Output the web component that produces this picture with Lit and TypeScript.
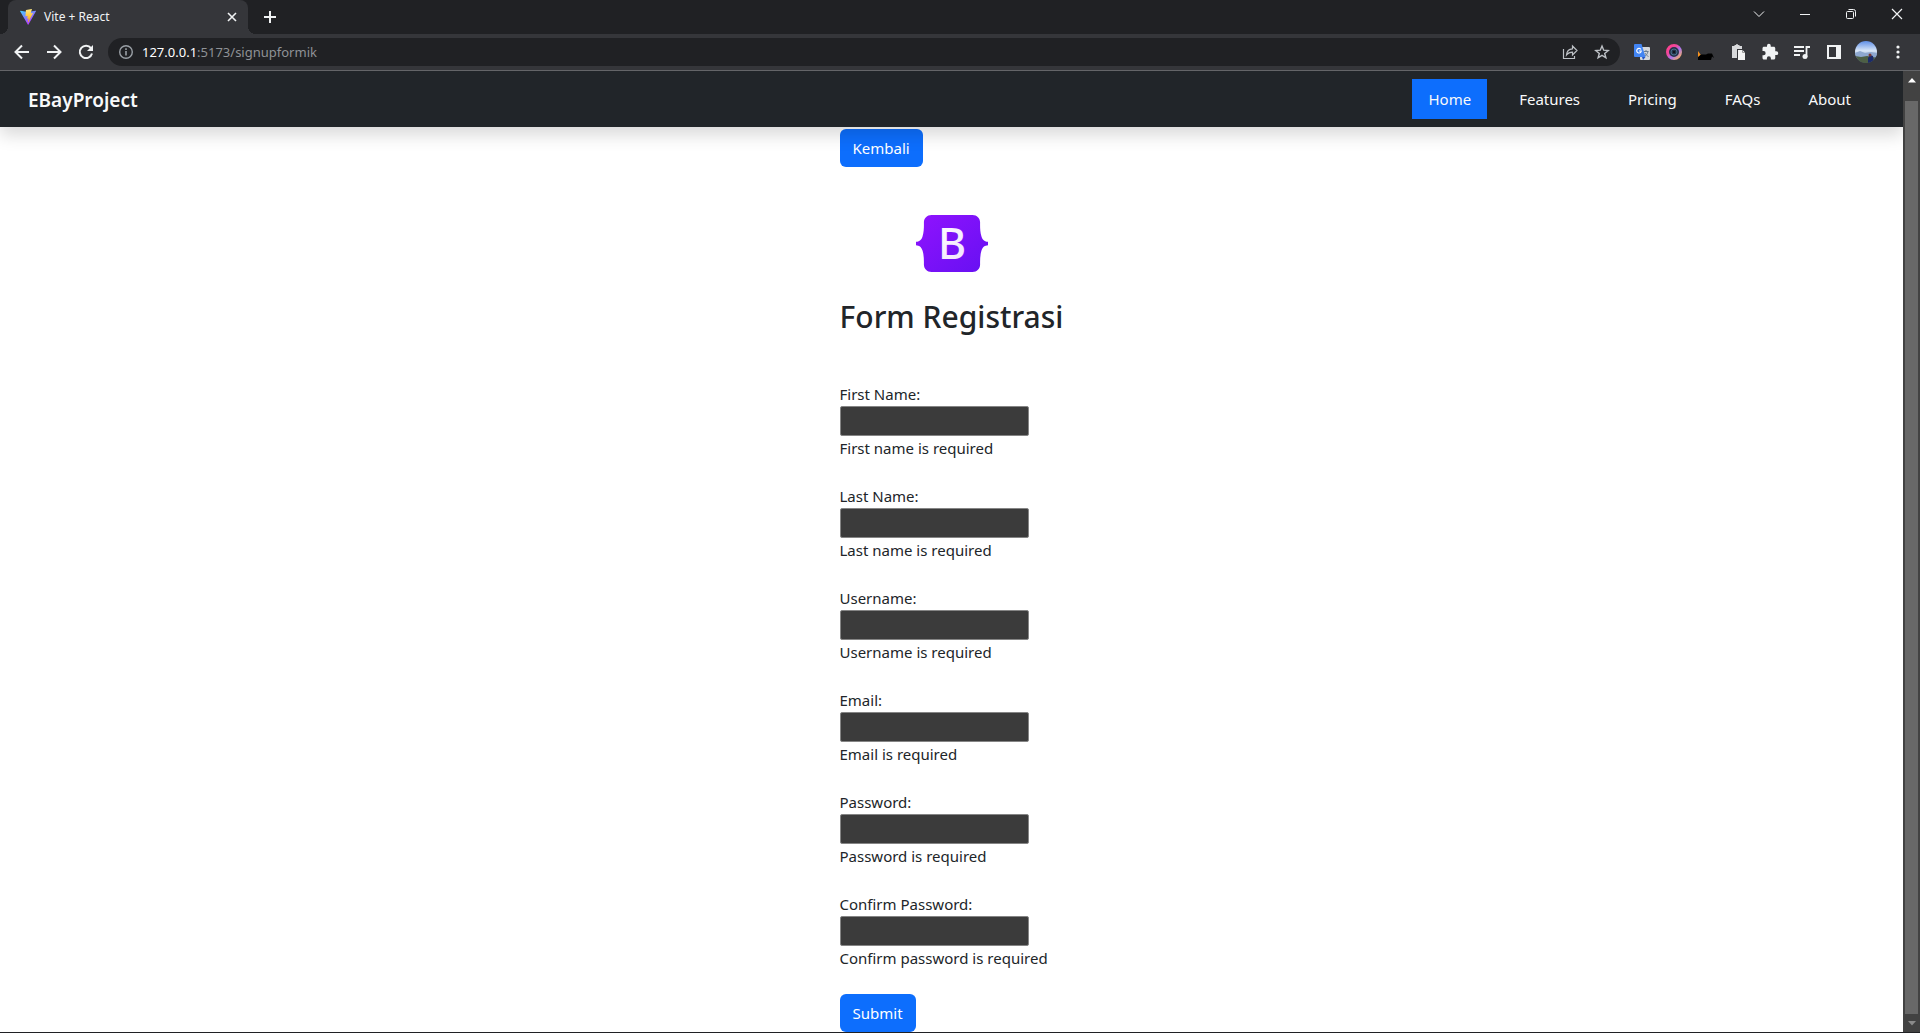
import { LitElement, html, css, svg } from "lit";
import { customElement, property } from "lit/decorators.js";
import { classMap } from "lit/directives/class-map.js";

const base = css`
  *, *::before, *::after { box-sizing: border-box; }
  button { font: inherit; margin: 0; padding: 0; border: 0; background: none; color: inherit; cursor: pointer; }
  svg { display: block; }
`;

const line = (d: string, width = 2) =>
  svg`<path d=${d} fill="none" stroke="currentColor" stroke-width=${width} />`;

@customElement("browser-bar")
class BrowserBar extends LitElement {
  static styles = [base, css`
    :host { display: block; color: #f1f3f4; font-family: "Noto Sans", "Open Sans", sans-serif; }
    .strip { display: flex; align-items: stretch; height: 34px; padding-left: 8px; background: #202124; }
    .tab {
      position: relative; display: flex; align-items: center; width: 240px; padding: 0 8px 0 12px;
      background: #35363a; border-radius: 8px 8px 0 0; font-size: 12px;
    }
    .tab::before, .tab::after { content: ""; position: absolute; bottom: 0; width: 8px; height: 8px; }
    .tab::before { right: 100%; background: radial-gradient(circle at 0 0, transparent 8px, #35363a 8px); }
    .tab::after { left: 100%; background: radial-gradient(circle at 100% 0, transparent 8px, #35363a 8px); }
    .title { flex: 1; padding-left: 8px; text-align: left; line-height: 16px; }
    .plus { width: 44px; padding: 0 14px; }
    .windows { display: flex; margin-left: auto; }
    .windows button { display: grid; place-items: center; width: 46px; padding-bottom: 6px; }
    .tools { display: flex; align-items: center; height: 36px; padding: 0 6px; background: #35363a; }
    .tools > button { display: grid; place-items: center; width: 32px; height: 32px; }
    .omni {
      display: flex; align-items: center; flex: 1; height: 28px; margin: 0 6px; padding: 0 10px;
      border-radius: 14px; background: #202124; font-size: 13px; line-height: 20px;
    }
    .host { padding-left: 8px; color: #fff; }
    .path { flex: 1; min-width: 0; padding: 0; border: 0; outline: 0; background: none; color: #8f9296; font: inherit; }
    .info { color: #9aa0a6; }
    .omni .end { display: grid; place-items: center; width: 32px; color: #bdc1c6; }
    .omni .last { width: 16px; margin-left: 8px; }
    .edge { height: 1px; background: #646568; }
  `];

  render() {
    return html`
      <div class="strip">
        <div class="tab">
          <svg width="16" height="16" viewBox="0 0 32 32" aria-hidden="true">
            <defs>
              <linearGradient id="v" x1="0" y1="0" x2="0.6" y2="1"><stop offset="0" stop-color="#41d1ff" /><stop offset="1" stop-color="#bd34fe" /></linearGradient>
              <linearGradient id="y" x1="0" y1="0" x2="0" y2="1"><stop offset="0" stop-color="#ffea83" /><stop offset="1" stop-color="#ffa800" /></linearGradient>
            </defs>
            <path fill="url(#v)" d="M31.9 4.6 17 31.2c-.3.6-1.1.6-1.4 0L.2 4.6C-.2 4 .4 3.2 1 3.3L16 6l15-2.700c.8-.1 1.300.6.9 1.300z" />
            <path fill="url(#y)" d="M23.300 0 12.200 2.200c-.2 0-.4.2-.4.4L11 14.200c0 .3.200.500.500.400l3.200-.700c.3-.1.600.2.500.500l-.900 4.400c-.1.3.2.600.500.500l1.900-.600c.3-.1.600.2.500.500l-1.500 7c-.1.5.500.700.700.300L25.900 8.700c.2-.3-.1-.7-.5-.6l-3.300.6c-.3.1-.6-.2-.5-.5L23.800.6c.1-.4-.1-.7-.5-.6z" />
          </svg>
          <span class="title">Vite + React</span>
          <button aria-label="Close tab">
            <svg width="16" height="16" viewBox="0 0 16 16">${line("M4 4l8 8M12 4l-8 8", 1.6)}</svg>
          </button>
        </div>
        <button class="plus" aria-label="New tab">
          <svg width="16" height="16" viewBox="0 0 16 16">${line("M8 2v12M2 8h12", 2)}</svg>
        </button>
        <div class="windows">
          <button aria-label="Search tabs"><svg width="12" height="12" viewBox="0 0 12 12">${line("M1 3.500l5 5 5-5", 1)}</svg></button>
          <button aria-label="Minimize"><svg width="12" height="12" viewBox="0 0 12 12">${line("M1 6.500h10", 1)}</svg></button>
          <button aria-label="Restore">
            <svg width="12" height="12" viewBox="0 0 12 12">
              <rect x="1.500" y="3.500" width="7" height="7" rx="1" fill="none" stroke="currentColor" />
              ${line("M3.500 1.500h5a2 2 0 0 1 2 2v5", 1)}
            </svg>
          </button>
          <button aria-label="Close"><svg width="12" height="12" viewBox="0 0 12 12">${line("M1 1l10 10M11 1l-10 10", 1.2)}</svg></button>
        </div>
      </div>
      <div class="tools">
        <button aria-label="Back"><svg width="16" height="16" viewBox="0 0 16 16">${line("M15 8H2M8 1.500L1.500 8 8 14.500")}</svg></button>
        <button aria-label="Forward"><svg width="16" height="16" viewBox="0 0 16 16">${line("M1 8h13M8 1.500L14.500 8 8 14.500")}</svg></button>
        <button aria-label="Reload">
          <svg width="16" height="16" viewBox="0 0 16 16">
            ${line("M13 4.200A6.200 6.200 0 1 0 14 9.500")}
            <path fill="currentColor" d="M15 1v6H9z" />
          </svg>
        </button>
        <div class="omni">
          <svg class="info" width="16" height="16" viewBox="0 0 16 16" aria-hidden="true">
            <circle cx="8" cy="8" r="6.300" fill="none" stroke="currentColor" stroke-width="1.400" />
            ${line("M8 7v4.500M8 4.300v1.600", 1.6)}
          </svg>
          <label class="host" for="url">127.0.0.1</label>
          <input class="path" id="url" type="text" value=":5173/signupformik" />
          <button class="end" aria-label="Share">
            <svg width="16" height="16" viewBox="0 0 16 16">
              ${line("M1.500 5v9.500h11V12", 1.2)}
              ${line("M4.500 11c.3-4 2.500-6 6-6.200V2L15 6.500 10.500 11V8.200C8 8.200 6 9 4.500 11z", 1.2)}
            </svg>
          </button>
          <button class="end last" aria-label="Bookmark this tab">
            <svg width="16" height="16" viewBox="0 0 16 16">${line("M8 2l1.700 4.200 4.500.3-3.500 2.900 1.200 4.400L8 11.400l-3.900 2.400 1.200-4.400L1.800 6.500l4.500-.3z", 1.4)}</svg>
          </button>
        </div>
        <button aria-label="Translate">
          <svg width="16" height="16" viewBox="0 0 16 16">
            <rect x="6" y="3" width="10" height="13" rx="1" fill="#d5d8dc" />
            ${svg`<path d="M9.500 7.500h5M12 6v1.500M14 7.500c-.5 2.500-2 4-3.500 5M11 9c.7 1.500 1.700 2.500 3.500 3.500" stroke="#6b7f93" fill="none" />`}
            <path d="M1 0h6.500L11.500 13H1a1 1 0 0 1-1-1V1a1 1 0 0 1 1-1z" fill="#4285f4" />
            <path d="M8 13h3.500L9 16z" fill="#2456c4" />
            <path d="M7 5.500A2.300 2.300 0 1 0 7.300 7H5" stroke="#fff" stroke-width="1.200" fill="none" />
          </svg>
        </button>
        <button aria-label="Camera extension">
          <svg width="16" height="16" viewBox="0 0 16 16">
            <defs><linearGradient id="ring" x1="0" y1="0" x2="1" y2="1"><stop offset="0" stop-color="#ff3d8b" /><stop offset="0.350" stop-color="#f0489c" /><stop offset="0.600" stop-color="#a875f0" /><stop offset="1" stop-color="#ffb35a" /></linearGradient></defs>
            <circle cx="8" cy="8" r="6.500" fill="#26324a" stroke="url(#ring)" stroke-width="3" />
            <circle cx="8" cy="8" r="3" fill="none" stroke="#46708c" />
            <circle cx="8" cy="8" r="1.200" fill="#10151d" />
          </svg>
        </button>
        <button aria-label="Cat extension">
          <svg width="16" height="16" viewBox="0 0 16 16">
            <path d="M0 7l2.500 3.500V13H0z" fill="#f6921e" />
            <path d="M0 13l3-2.500h5L10 9.500h4L16 14l-2-1.500-1 3.500H0z" fill="#000" />
          </svg>
        </button>
        <button aria-label="Clipboard extension">
          <svg width="16" height="16" viewBox="0 0 16 16">
            <path d="M2 2h2.500V1H6a1 1 0 0 1 2 0h1.500v1H12v3H7v9H2z" fill="#d8d9db" />
            <path d="M8 6h4.500L15 8.500V16H8z" fill="#f3f3f3" />
            <path d="M12.500 6v2.500H15" fill="none" stroke="#999" />
          </svg>
        </button>
        <button aria-label="Extensions">
          <svg width="18" height="18" viewBox="0 0 24 24"><path fill="currentColor" d="M20.500 11H19V7c0-1.100-.9-2-2-2h-4V3.500a2.500 2.500 0 0 0-5 0V5H4c-1.100 0-2 .9-2 2v3.800h1.500a2.700 2.700 0 0 1 0 5.400H2V20c0 1.100.9 2 2 2h3.800v-1.500a2.700 2.700 0 0 1 5.400 0V22H17c1.100 0 2-.9 2-2v-4h1.500a2.500 2.500 0 0 0 0-5z" /></svg>
        </button>
        <button aria-label="Media controls">
          <svg width="18" height="16" viewBox="0 0 18 16">
            ${line("M1 3h10M1 7h10M1 11h6M13.500 13V3H17", 1.8)}
            <circle cx="12" cy="12.500" r="2.500" fill="currentColor" />
          </svg>
        </button>
        <button aria-label="Side panel">
          <svg width="14" height="14" viewBox="0 0 14 14"><path fill="currentColor" fill-rule="evenodd" d="M0 0h14v14H0zM2 2v10h7V2z" /></svg>
        </button>
        <button aria-label="Profile">
          <svg width="22" height="22" viewBox="0 0 22 22">
            <defs>
              <linearGradient id="sky" x1="0" y1="0" x2="0" y2="1"><stop offset="0" stop-color="#5f8fe8" /><stop offset="0.450" stop-color="#dbe8f8" /><stop offset="0.650" stop-color="#8fa9cc" /><stop offset="1" stop-color="#3c5066" /></linearGradient>
              <clipPath id="round"><circle cx="11" cy="11" r="11" /></clipPath>
            </defs>
            <g clip-path="url(#round)">
              <rect width="22" height="22" fill="url(#sky)" />
              <path d="M0 12l5-2 5 2 6-1 6 1v4H0z" fill="#8ea8cf" />
              <path d="M0 15l6 1 6-1 10 2v5H0z" fill="#4d5f45" />
              <path d="M13 22v-5l2-3 3 1 1 7z" fill="#1b2a6b" />
              <circle cx="15" cy="14" r="1.500" fill="#7b3a34" />
            </g>
          </svg>
        </button>
        <button aria-label="Menu">
          <svg width="4" height="16" viewBox="0 0 4 16"><g fill="currentColor"><circle cx="2" cy="3" r="1.600" /><circle cx="2" cy="8" r="1.600" /><circle cx="2" cy="13" r="1.600" /></g></svg>
        </button>
      </div>
      <div class="edge"></div>
    `;
  }
}

@customElement("site-header")
class SiteHeader extends LitElement {
  @property() active = "Home";

  static styles = [base, css`
    :host { display: block; position: relative; z-index: 1; box-shadow: 0 8px 16px rgba(0, 0, 0, 0.15); }
    .bar { display: flex; align-items: center; height: 56px; padding: 0 36px 0 28px; background: #212529; }
    .brand { padding-top: 2px; color: #f8f9fa; font-size: 19px; font-weight: 600; text-decoration: none; }
    .links { display: flex; gap: 16px; margin-left: auto; }
    .link { padding: 8px 16px; color: #f8f9fa; line-height: 24px; text-decoration: none; }
    .on { background: #0d6efd; }
  `];

  render() {
    return html`
      <header class="bar">
        <a class="brand" href="#">EBayProject</a>
        <nav class="links">
          ${["Home", "Features", "Pricing", "FAQs", "About"].map(
            (name) => html`<a class=${classMap({ link: true, on: name === this.active })} href="#">${name}</a>`
          )}
        </nav>
      </header>
    `;
  }
}

const fields = [
  { id: "firstName", label: "First Name:", error: "First name is required", type: "text" },
  { id: "lastName", label: "Last Name:", error: "Last name is required", type: "text" },
  { id: "username", label: "Username:", error: "Username is required", type: "text" },
  { id: "email", label: "Email:", error: "Email is required", type: "email" },
  { id: "password", label: "Password:", error: "Password is required", type: "password" },
  { id: "confirm", label: "Confirm Password:", error: "Confirm password is required", type: "password" },
];

@customElement("signup-form")
class SignupForm extends LitElement {
  static styles = [base, css`
    :host { display: flex; justify-content: center; padding-top: 2px; color: #212529; }
    .column { width: 224px; white-space: nowrap; }
    .btn { height: 38px; padding: 0 13px; border-radius: 6px; background: #0d6efd; color: #fff; line-height: 24px; }
    .logo { margin: 48px 0 24px 76px; overflow: visible; }
    .title { margin: 0 0 46px; padding-top: 2px; font-size: 30px; font-weight: 500; line-height: 38px; }
    .field { display: flex; flex-direction: column; align-items: flex-start; margin-bottom: 24px; line-height: 24px; }
    .box { width: 189px; height: 30px; padding: 1px 4px; border: 1px solid #858585; border-radius: 2px; background: #3b3b3b; color: #fff; font: inherit; }
    .mark { font-family: "Noto Sans", "Open Sans", sans-serif; font-size: 43px; font-weight: 500; }
  `];

  render() {
    return html`
      <main class="column">
        <button class="btn" type="button">Kembali</button>
        <svg class="logo" width="72" height="57" viewBox="0 0 72 57" aria-hidden="true">
          <defs>
            <linearGradient id="bg" x1="0" y1="0" x2="1" y2="1"><stop offset="0" stop-color="#9013fe" /><stop offset="1" stop-color="#6610f2" /></linearGradient>
            <linearGradient id="fg" x1="0" y1="0" x2="0.500" y2="1"><stop offset="0" stop-color="#fff" /><stop offset="1" stop-color="#f1e5fc" /></linearGradient>
          </defs>
          <path fill="url(#bg)" d="M15.500 0C11 0 7.800 3.500 7.900 7.700c.1 4 0 9.200-1.300 13.500C5.300 25.500 3.100 26.500 0 26.800v3.400c3.100.3 5.300 1.300 6.600 5.600 1.300 4.300 1.400 9.500 1.300 13.500C7.800 53.500 11 57 15.500 57h41c4.500 0 7.700-3.500 7.600-7.700-.1-4 0-9.200 1.300-13.500 1.300-4.300 3.500-5.300 6.600-5.600v-3.400c-3.100-.3-5.300-1.300-6.600-5.600-1.300-4.300-1.400-9.500-1.300-13.500C64.200 3.500 61 0 56.500 0z" />
          <text class="mark" x="36" y="44" text-anchor="middle" fill="url(#fg)">B</text>
        </svg>
        <h2 class="title">Form Registrasi</h2>
        <form novalidate>
          ${fields.map(
            (f) => html`
              <div class="field">
                <label for=${f.id}>${f.label}</label>
                <input class="box" id=${f.id} type=${f.type} aria-describedby="${f.id}-error" />
                <span id="${f.id}-error">${f.error}</span>
              </div>
            `
          )}
          <button class="btn" type="button">Submit</button>
        </form>
      </main>
    `;
  }
}

@customElement("app-root")
class AppRoot extends LitElement {
  static styles = [base, css`
    :host {
      display: flex; flex-direction: column; min-height: 100vh; background: #fff;
      border-bottom: 1px solid #202124; box-sizing: border-box;
      font-family: "Noto Sans", "Open Sans", sans-serif; font-size: 15px;
    }
    .view { display: flex; flex: 1; }
    .page { flex: 1; min-width: 0; overflow: hidden; }
    .scroll { display: flex; flex-direction: column; align-items: center; width: 17px; padding: 7px 0 6px; background: #424242; }
    .thumb { flex: 1; width: 13px; margin: 18px 0 7px; background: #686868; }
  `];

  render() {
    return html`
      <browser-bar></browser-bar>
      <div class="view">
        <div class="page">
          <site-header active="Home"></site-header>
          <signup-form></signup-form>
        </div>
        <div class="scroll" aria-hidden="true">
          <svg width="8" height="5" viewBox="0 0 8 5"><path d="M4 0l4 4.500H0z" fill="#fff" /></svg>
          <div class="thumb"></div>
          <svg width="8" height="5" viewBox="0 0 8 5"><path d="M0 0h8L4 4.500z" fill="#8a8a8a" /></svg>
        </div>
      </div>
    `;
  }
}
